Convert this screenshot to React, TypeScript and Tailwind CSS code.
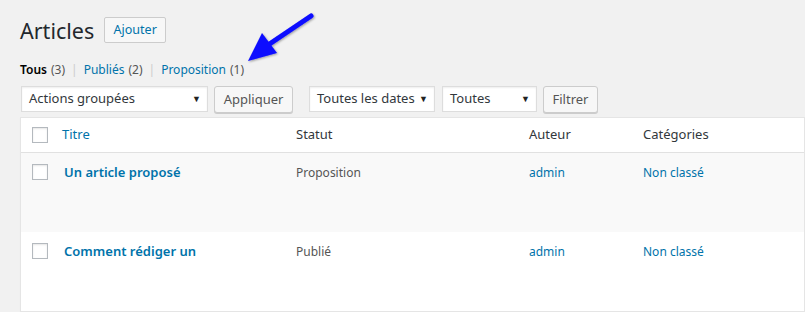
import React from "react";

const font = { fontFamily: '"Noto Sans", "Open Sans", Arial, sans-serif' };

function Select({ label, width }: { label: string; width: string }) {
  return (
    <div
      className={`flex h-[26px] items-center justify-between whitespace-nowrap border border-[#ddd] bg-white pl-[7px] pr-[6px] text-[13px] text-[#32373c] shadow-[inset_0_1px_2px_rgba(0,0,0,0.07)] ${width}`}
    >
      <span>{label}</span>
      <span className="text-[9px] text-[#222]">▼</span>
    </div>
  );
}

function Btn({ children, width }: { children: React.ReactNode; width: string }) {
  return (
    <div
      className={`flex h-[27px] items-center justify-center rounded-[3px] border border-[#ccc] bg-[#f7f7f7] text-[13px] text-[#555] shadow-[0_1px_0_#ccc] ${width}`}
    >
      {children}
    </div>
  );
}

function Checkbox() {
  return <div className="h-[16px] w-[16px] border border-[#b4b9be] bg-white shadow-[inset_0_1px_2px_rgba(0,0,0,0.1)]" />;
}

const rows = [
  { title: "Un article proposé", status: "Proposition", bg: "bg-[#f9f9f9]" },
  { title: "Comment rédiger un", status: "Publié", bg: "bg-white" },
];

export default function App() {
  return (
    <div className="relative h-[312px] w-[805px] overflow-hidden bg-[#f1f1f1] pl-[20px]" style={font}>
      {/* heading */}
      <div className="mt-[17px] flex h-[26px] items-center gap-[10px]">
        <h1 className="mt-[1px] text-[21.5px] font-normal leading-none text-[#23282d]">Articles</h1>
        <div className="flex h-[26px] w-[62px] items-center justify-center rounded-[2px] border border-[#ccc] bg-[#f7f7f7] text-[12.5px] text-[#0073aa]">
          Ajouter
        </div>
      </div>

      {/* views */}
      <div className="mt-[20px] flex h-[14px] items-center whitespace-nowrap text-[12px] text-[#555]">
        <span className="font-semibold text-[#000]">Tous</span>
        <span className="ml-[4px]">(3)</span>
        <span className="mx-[6px] text-[#ccc]">|</span>
        <span className="text-[#0073aa]">Publiés</span>
        <span className="ml-[4px]">(2)</span>
        <span className="mx-[6px] text-[#ccc]">|</span>
        <span className="text-[#0073aa]">Proposition</span>
        <span className="ml-[4px]">(1)</span>
      </div>

      {/* filters */}
      <div className="mt-[9px] flex items-start">
        <div className="ml-[1px]">
          <Select label="Actions groupées" width="w-[187px]" />
        </div>
        <div className="ml-[6px]">
          <Btn width="w-[79px]">Appliquer</Btn>
        </div>
        <div className="ml-[16px]">
          <Select label="Toutes les dates" width="w-[126px]" />
        </div>
        <div className="ml-[7px]">
          <Select label="Toutes" width="w-[95px]" />
        </div>
        <div className="ml-[6px]">
          <Btn width="w-[55px]">Filtrer</Btn>
        </div>
      </div>

      {/* table */}
      <div className="mt-[4px] border border-[#e5e5e5] bg-white text-[12px] shadow-[0_1px_1px_rgba(0,0,0,0.04)]">
        <div className="grid h-[35px] grid-cols-[41px_234px_233px_114px_1fr] items-center border-b border-[#e1e1e1] text-[13px] text-[#32373c]">
          <div className="pl-[11px]">
            <Checkbox />
          </div>
          <div className="text-[#0073aa]">Titre</div>
          <div>Statut</div>
          <div>Auteur</div>
          <div>Catégories</div>
        </div>
        {rows.map((r) => (
          <div
            key={r.title}
            className={`grid h-[79px] grid-cols-[41px_234px_233px_114px_1fr] items-start pt-[11px] ${r.bg}`}
          >
            <div className="pl-[11px]">
              <Checkbox />
            </div>
            <div className="pl-[2px] text-[13px] font-semibold leading-[17px] text-[#0073aa]">{r.title}</div>
            <div className="leading-[17px] text-[#555]">{r.status}</div>
            <div className="leading-[17px] text-[#0073aa]">admin</div>
            <div className="leading-[17px] text-[#0073aa]">Non classé</div>
          </div>
        ))}
      </div>

      {/* annotation arrow */}
      <svg className="absolute left-0 top-0" width="805" height="312" viewBox="0 0 805 312">
        <defs>
          <filter id="sh" x="-20%" y="-20%" width="140%" height="140%">
            <feDropShadow dx="1" dy="1" stdDeviation="1" floodColor="#000" floodOpacity="0.35" />
          </filter>
        </defs>
        <g filter="url(#sh)">
          <line x1="311" y1="16" x2="268" y2="45" stroke="#0a0aff" strokeWidth="5" strokeLinecap="round" />
          <polygon points="248,61 262,33 277,53" fill="#0a0aff" />
        </g>
      </svg>
    </div>
  );
}
